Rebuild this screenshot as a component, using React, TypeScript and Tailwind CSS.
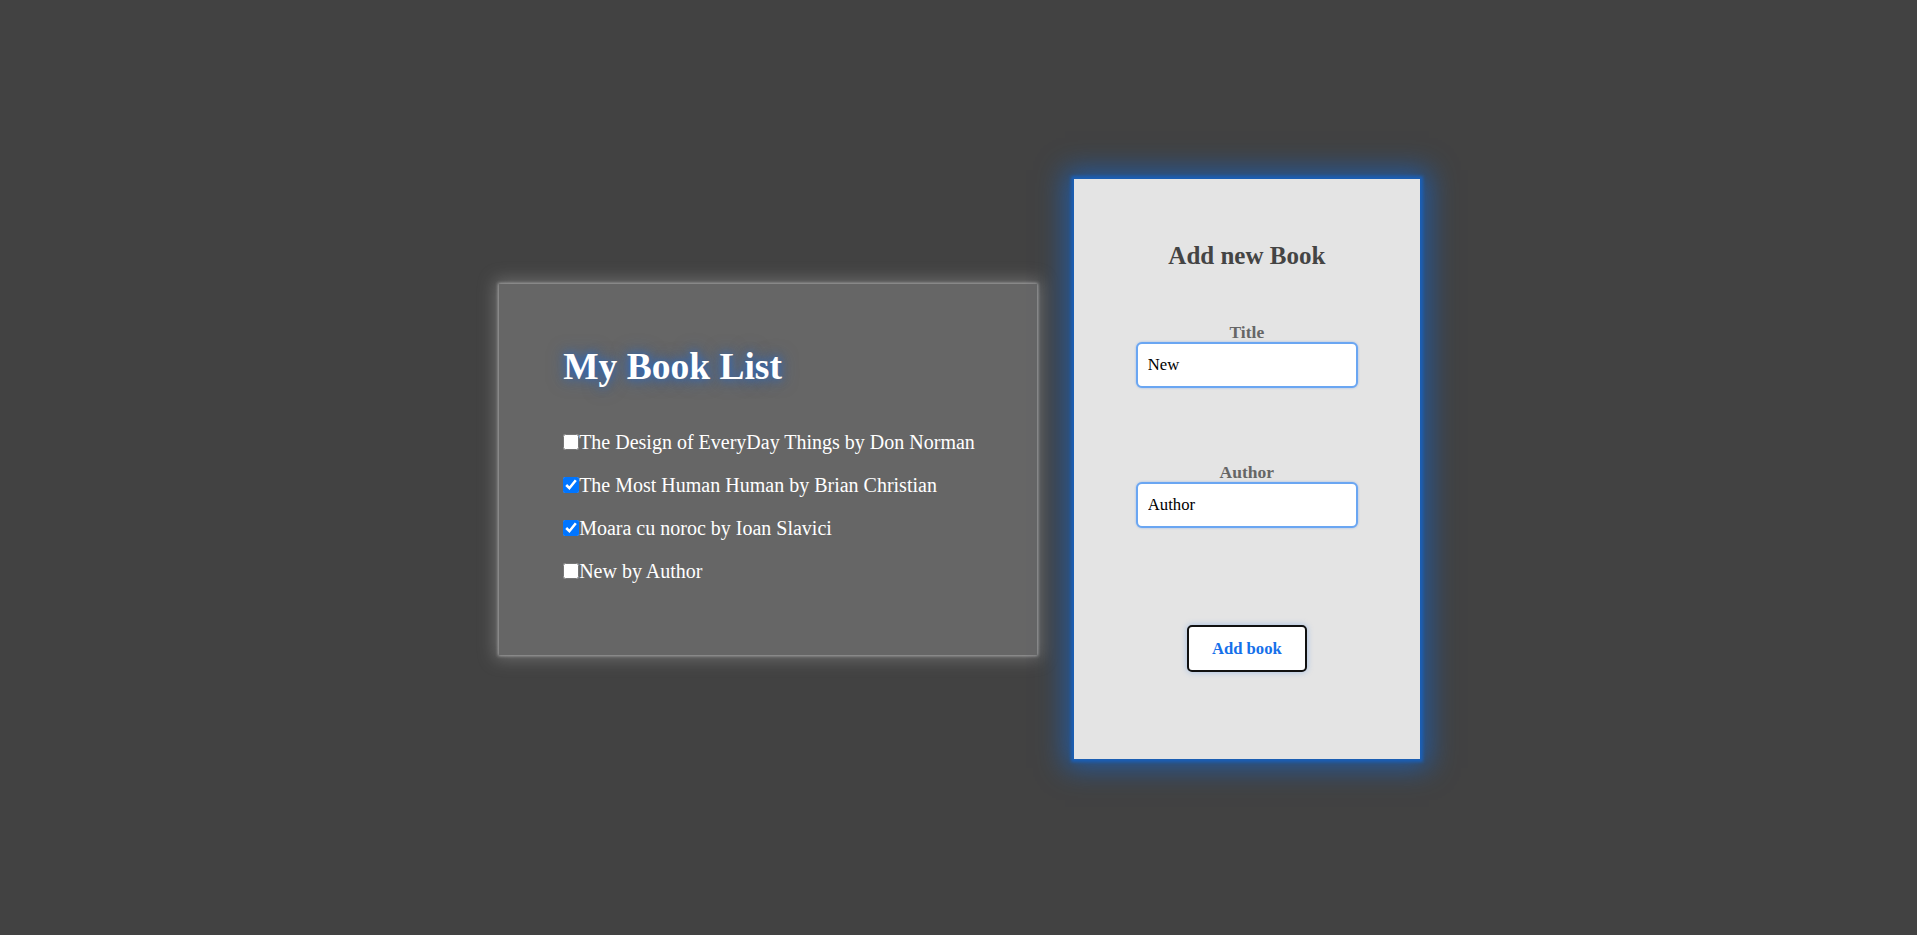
import React from "react";

const books = [
  { text: "The Design of EveryDay Things by Don Norman", done: false },
  { text: "The Most Human Human by Brian Christian", done: true },
  { text: "Moara cu noroc by Ioan Slavici", done: true },
  { text: "New by Author", done: false },
];

const serif = { fontFamily: '"Liberation Serif", "Times New Roman", serif' };

export default function App() {
  return (
    <div
      className="w-full h-[935px] pt-[3px] pl-[2px] bg-[#424242] flex items-center justify-center gap-[37px] font-['Liberation_Serif','Times_New_Roman',serif]"
    >
      <div className="bg-[#666666] pl-[64px] pr-[62px] pt-[61px] pb-[72px] shadow-[0_0_3px_1px_rgba(220,220,220,0.55),0_0_16px_4px_rgba(190,190,190,0.35)]">
        <h1 className="text-[37.5px] leading-[43px] font-bold text-white [text-shadow:0_0_10px_rgba(35,105,205,0.9),0_0_18px_rgba(35,105,205,0.6)]">
          My Book List
        </h1>
        <div className="mt-[43px] flex flex-col gap-[20px]">
          {books.map((b) => (
            <div key={b.text} className="flex items-center h-[23px] text-[20px] leading-[23px] text-white">
              <input
                type="checkbox"
                defaultChecked={b.done}
                className="m-0 w-[16px] h-[16px] shrink-0"
              />
              <span className="whitespace-nowrap">{b.text}</span>
            </div>
          ))}
        </div>
      </div>

      <div className="w-[346px] h-[580px] bg-[#e4e4e4] flex flex-col items-center pt-[62px] shadow-[0_0_3px_3px_#1b5fb5,0_0_26px_9px_rgba(27,95,181,0.8)]">
        <h2 className="text-[25px] leading-[29px] font-bold text-[#444444]">Add new Book</h2>
        <label className="mt-[52px] text-[17.5px] leading-[20px] font-bold text-[#666666]">Title</label>
        <input
          type="text"
          defaultValue="New"
          style={serif}
          className="w-[222px] h-[46px] border-2 border-[#6aa6f2] rounded-[6px] bg-white pl-[10px] text-[16.67px] text-black outline-none shadow-[0_0_2px_rgba(90,150,240,0.6)]"
        />
        <label className="mt-[74px] text-[17.5px] leading-[20px] font-bold text-[#666666]">Author</label>
        <input
          type="text"
          defaultValue="Author"
          style={serif}
          className="w-[222px] h-[46px] border-2 border-[#6aa6f2] rounded-[6px] bg-white pl-[10px] text-[16.67px] text-black outline-none shadow-[0_0_2px_rgba(90,150,240,0.6)]"
        />
        <button
          type="button"
          style={serif}
          className="mt-[97px] w-[120px] h-[47px] bg-white border-2 border-[#111111] rounded-[5px] text-[16.67px] font-bold text-[#1670ea] shadow-[0_0_6px_rgba(40,120,230,0.35)]"
        >
          Add book
        </button>
      </div>
    </div>
  );
}
